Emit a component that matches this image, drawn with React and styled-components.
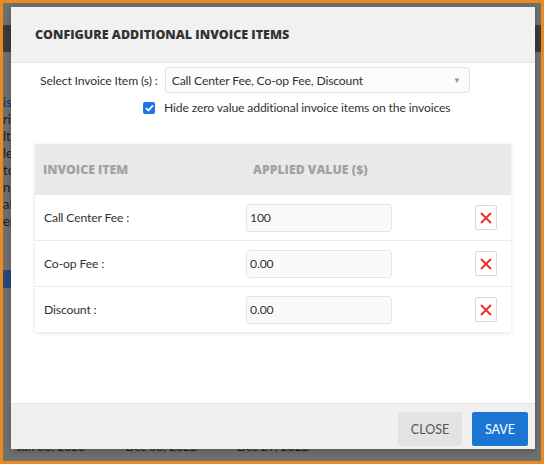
import React from "react";
import styled, { createGlobalStyle } from "styled-components";

const Global = createGlobalStyle`
  html, body { margin: 0; padding: 0; background: #fff; }
  * { box-sizing: border-box; }
`;

const Frame = styled.div`
  position: relative;
  width: 544px;
  height: 464px;
  border: 3px solid #ec8a22;
  overflow: hidden;
  font-family: "Lato", "Noto Sans", sans-serif;
`;

const Backdrop = styled.div`
  width: 100%;
  height: 100%;
  background: #717171;
  display: flex;
  flex-direction: column;
`;

const BgBar = styled.div`
  margin-top: 22px;
  height: 27px;
  background: #3c3c3c;
`;

const BgLines = styled.div`
  flex: 1;
  padding: 8px 4px 0 0;
  display: flex;
  flex-direction: column;
  gap: 2px;
  font-size: 13px;
  color: #1c1c1c;
`;

const BgLine = styled.div`
  color: ${(p) => (p.$blue ? "#23406e" : "#1c1c1c")};
  font-weight: ${(p) => (p.$blue ? 700 : 400)};
  height: 15px;
`;

const BgButton = styled.div`
  margin-top: 40px;
  width: 8px;
  height: 18px;
  background: #2a4a7c;
`;

const BgFoot = styled.div`
  height: 30px;
  display: flex;
  gap: 40px;
  padding: 8px 0 0 14px;
  font-size: 12px;
  color: #222;
`;

const Modal = styled.div`
  position: absolute;
  left: 8px;
  top: 4px;
  width: 524px;
  height: 442px;
  background: #fff;
  display: flex;
  flex-direction: column;
  box-shadow: 0 2px 8px rgba(0, 0, 0, 0.25);
`;

const Header = styled.div`
  height: 56px;
  background: #f1f1f1;
  border-bottom: 1px solid #e3e3e3;
  display: flex;
  align-items: center;
  padding-left: 24px;
  font-family: "Open Sans", sans-serif;
  font-weight: 800;
  font-size: 12.5px;
  color: #333;
`;

const Body = styled.div`
  flex: 1;
  padding-top: 4px;
  display: flex;
  flex-direction: column;
  color: #333;
  font-size: 12.2px;
  letter-spacing: -0.15px;
`;

const FieldRow = styled.div`
  display: flex;
  align-items: center;
  gap: 7px;
  padding-left: 29px;
`;

const Select = styled.div`
  width: 305px;
  height: 26px;
  border: 1px solid #e2e2e2;
  border-radius: 3px;
  background: #fbfbfb;
  display: flex;
  align-items: center;
  justify-content: space-between;
  padding: 0 8px 0 6px;
`;

const Caret = styled.span`
  font-size: 8px;
  color: #999;
`;

const CheckRow = styled.label`
  display: flex;
  align-items: center;
  gap: 9px;
  padding-left: 132px;
  margin-top: 7px;
`;

const Check = styled.span`
  width: 12px;
  height: 12px;
  border-radius: 2px;
  background: #1f74e8;
  display: flex;
  align-items: center;
  justify-content: center;
`;

const Card = styled.div`
  margin: 29px 0 0 24px;
  width: 476px;
  background: #fff;
  box-shadow: 0 1px 4px rgba(0, 0, 0, 0.12);
`;

const Grid = styled.div`
  display: grid;
  grid-template-columns: 211px 1fr 36px;
  align-items: center;
  height: ${(p) => p.$h}px;
  padding-right: 14px;
  background: ${(p) => (p.$head ? "#e9e9e9" : "#fff")};
  border-top: ${(p) => (p.$first || p.$head ? "none" : "1px solid #ebebeb")};
`;

const HeadCell = styled.div`
  font-family: "Open Sans", sans-serif;
  font-weight: 800;
  font-size: 12.3px;
  letter-spacing: 0;
  color: #a2a2a2;
  padding-left: ${(p) => p.$pl}px;
`;

const RowLabel = styled.div`
  padding-left: 9px;
`;

const ValueInput = styled.div`
  width: 146px;
  height: 28px;
  border: 1px solid #e6e6e6;
  border-radius: 3px;
  background: #fafafa;
  display: flex;
  align-items: center;
  padding-left: 3px;
`;

const RemoveBtn = styled.button`
  justify-self: end;
  width: 22px;
  height: 25px;
  border: 1px solid #d9d9d9;
  border-radius: 2px;
  background: #fff;
  padding: 0;
  display: flex;
  align-items: center;
  justify-content: center;
`;

const Footer = styled.div`
  height: 46px;
  background: #f0f0f0;
  border-top: 1px solid #e6e6e6;
  display: flex;
  justify-content: flex-end;
  align-items: flex-start;
  gap: 10px;
  padding: 8px 7px 0 0;
`;

const Btn = styled.button`
  height: 34px;
  width: ${(p) => p.$w}px;
  border: none;
  border-radius: 2px;
  background: ${(p) => (p.$primary ? "#1b76d3" : "#e3e3e3")};
  color: ${(p) => (p.$primary ? "#fff" : "#555")};
  font-family: "Lato", sans-serif;
  font-size: 12.5px;
`;

const rows = [
  { label: "Call Center Fee :", value: "100" },
  { label: "Co-op Fee :", value: "0.00" },
  { label: "Discount :", value: "0.00" },
];

const XIcon = () => (
  <svg width="12" height="12" viewBox="0 0 12 12">
    <path d="M1 1L11 11M11 1L1 11" stroke="#ec2a22" strokeWidth="1.8" />
  </svg>
);

export default function App() {
  return (
    <>
      <Global />
      <Frame>
        <Backdrop>
          <BgBar />
          <BgLines>
            <BgLine />
            <BgLine />
            <BgLine $blue>is</BgLine>
            <BgLine>ri</BgLine>
            <BgLine>lty</BgLine>
            <BgLine>le</BgLine>
            <BgLine>to</BgLine>
            <BgLine>n</BgLine>
            <BgLine>al</BgLine>
            <BgLine>er</BgLine>
            <BgButton />
          </BgLines>
          <BgFoot>
            <span>Jan 03, 2023</span>
            <span>Dec 03, 2022</span>
            <span>Dec 29, 2022</span>
          </BgFoot>
        </Backdrop>
        <Modal>
          <Header>CONFIGURE ADDITIONAL INVOICE ITEMS</Header>
          <Body>
            <FieldRow>
              <span>Select Invoice Item (s) :</span>
              <Select>
                <span>Call Center Fee, Co-op Fee, Discount</span>
                <Caret>▼</Caret>
              </Select>
            </FieldRow>
            <CheckRow>
              <Check>
                <svg width="9" height="8" viewBox="0 0 9 8">
                  <path d="M1 4.2L3.4 6.5L8 1.3" stroke="#fff" strokeWidth="1.8" fill="none" />
                </svg>
              </Check>
              <span>Hide zero value additional invoice items on the invoices</span>
            </CheckRow>
            <Card>
              <Grid $head $h={51}>
                <HeadCell $pl={8}>INVOICE ITEM</HeadCell>
                <HeadCell $pl={7}>APPLIED VALUE ($)</HeadCell>
                <span />
              </Grid>
              {rows.map((r, i) => (
                <Grid key={r.label} $first={i === 0} $h={i === 0 ? 45 : 46}>
                  <RowLabel>{r.label}</RowLabel>
                  <ValueInput>{r.value}</ValueInput>
                  <RemoveBtn>
                    <XIcon />
                  </RemoveBtn>
                </Grid>
              ))}
            </Card>
          </Body>
          <Footer>
            <Btn $w={64}>CLOSE</Btn>
            <Btn $primary $w={56}>SAVE</Btn>
          </Footer>
        </Modal>
      </Frame>
    </>
  );
}
